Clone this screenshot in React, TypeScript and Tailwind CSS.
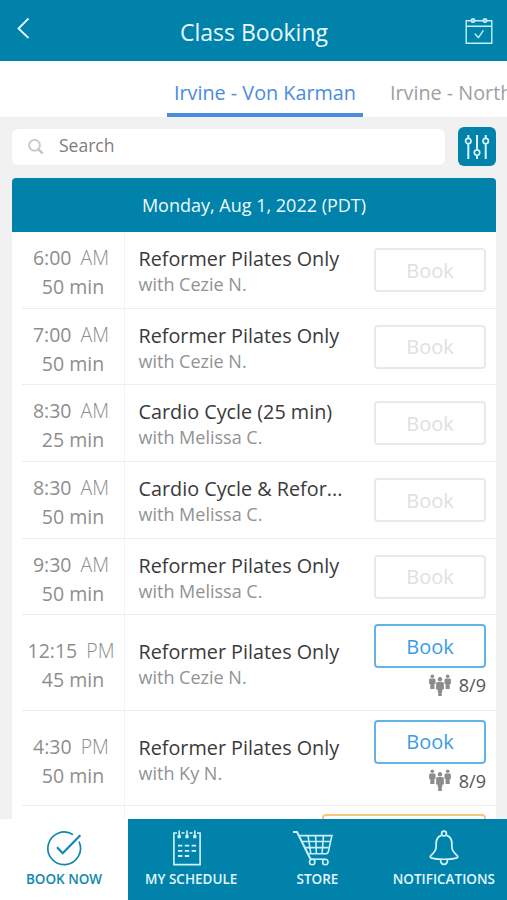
import type { ReactNode } from 'react'

type ClassRow = {
  time: string
  period: string
  length: string
  name: string
  teacher: string
  spots?: string
}

const CLASSES: ClassRow[] = [
  { time: '6:00', period: 'AM', length: '50 min', name: 'Reformer Pilates Only', teacher: 'with Cezie N.' },
  { time: '7:00', period: 'AM', length: '50 min', name: 'Reformer Pilates Only', teacher: 'with Cezie N.' },
  { time: '8:30', period: 'AM', length: '25 min', name: 'Cardio Cycle (25 min)', teacher: 'with Melissa C.' },
  { time: '8:30', period: 'AM', length: '50 min', name: 'Cardio Cycle & Refor...', teacher: 'with Melissa C.' },
  { time: '9:30', period: 'AM', length: '50 min', name: 'Reformer Pilates Only', teacher: 'with Melissa C.' },
  { time: '12:15', period: 'PM', length: '45 min', name: 'Reformer Pilates Only', teacher: 'with Cezie N.', spots: '8/9' },
  { time: '4:30', period: 'PM', length: '50 min', name: 'Reformer Pilates Only', teacher: 'with Ky N.', spots: '8/9' },
]

function BackIcon() {
  return (
    <svg width="14" height="22" viewBox="0 0 14 22" fill="none" stroke="#dff6fc" strokeWidth="1.9" aria-hidden="true">
      <path d="M11.5 1.5L1.5 11.5L11.5 21" />
    </svg>
  )
}

function CalendarCheckIcon() {
  return (
    <svg width="28" height="28" viewBox="0 0 28 28" fill="none" stroke="#c5eefa" strokeWidth="1.4" aria-hidden="true">
      <path d="M6.2 3.8H1.2V26.2H26.8V3.8H21.8M9.8 3.8H18.2M1.2 9.2H26.8" />
      <circle cx="8" cy="3.6" r="1.8" fill="#8fd3e8" />
      <circle cx="20" cy="3.6" r="1.8" fill="#8fd3e8" />
      <path d="M9.8 16.8L13.4 20.6L18.4 13.4" />
    </svg>
  )
}

function SearchIcon() {
  return (
    <svg width="16" height="16" viewBox="0 0 16 16" fill="none" stroke="#c6c6c6" aria-hidden="true">
      <circle cx="6.5" cy="6.3" r="5.4" strokeWidth="1.8" />
      <path d="M10.5 10.3L14.8 14.6" strokeWidth="2.6" />
    </svg>
  )
}

function SlidersIcon() {
  return (
    <svg width="26" height="26" viewBox="0 0 26 26" fill="none" stroke="#d8f5fd" strokeWidth="2" aria-hidden="true">
      <path d="M4.3 1V4M4.3 10V25M13 1V15.5M13 21.5V25M21.7 1V4M21.7 10V25" />
      <circle cx="4.3" cy="7" r="2.7" strokeWidth="1.7" />
      <circle cx="13" cy="18.6" r="2.7" strokeWidth="1.7" />
      <circle cx="21.7" cy="7" r="2.7" strokeWidth="1.7" />
    </svg>
  )
}

function PeopleIcon() {
  return (
    <svg width="22" height="23" viewBox="0 0 22 23" fill="#8c8c8c" aria-hidden="true">
      <circle cx="3.3" cy="2.2" r="1.8" />
      <path d="M1.4 4.6H5.2Q6.5 4.6 6.5 6V10H5.4V15H1.3V10H0.1V6Q0.1 4.6 1.4 4.6Z" />
      <circle cx="18.7" cy="2.2" r="1.8" />
      <path d="M16.8 4.6H20.6Q21.9 4.6 21.9 6V10H20.7V15H16.6V10H15.5V6Q15.5 4.6 16.8 4.6Z" />
      <circle cx="11" cy="5.2" r="2.2" />
      <path d="M8.8 8H13.2Q14.9 8 14.9 9.7V15.5H13.3V18H12.8V22H9.2V18H8.7V15.5H7.1V9.7Q7.1 8 8.8 8Z" />
    </svg>
  )
}

function BookNowIcon() {
  return (
    <svg width="36" height="36" viewBox="0 0 36 36" fill="none" stroke="#1088ae" strokeWidth="1.7" aria-hidden="true">
      <path d="M27 4.6A16.3 16.3 0 1 0 33 11.5" />
      <path d="M11 17.2L16.7 23.2L34.3 5.3" strokeWidth="2.2" />
    </svg>
  )
}

function ScheduleIcon() {
  return (
    <svg width="30" height="36" viewBox="0 0 30 36" fill="none" stroke="#d3f3fc" strokeWidth="1.6" className="mr-2" aria-hidden="true">
      <path d="M5 3H1.9V34.6H28.1V3H25" />
      <path d="M7.2 0.5V6M15 0.5V6M22.8 0.5V6M9.5 3H12.5M17.5 3H20.5" />
      <path d="M7.2 5V8.2M15 5V8.2M22.8 5V8.2" strokeWidth="3.2" />
      <path d="M6 15.6H10.4M12.8 15.6H17.2M19.6 15.6H24M6 20.8H10.4M12.8 20.8H17.2M19.6 20.8H24M6 26H10.4M12.8 26H17.2" strokeWidth="1.8" />
    </svg>
  )
}

function CartIcon() {
  return (
    <svg width="42" height="36" viewBox="0 0 42 36" fill="none" stroke="#c9f0fb" strokeWidth="1.6" className="mr-[9px]" aria-hidden="true">
      <path d="M1 2H5L18.6 29.2" strokeWidth="2" />
      <path d="M7.2 5.6H39.9L36.4 21.5Q35.9 23.7 33.8 23.7H15.8" />
      <path d="M9.8 11.5H38M12.5 17.6H36.7M16 5.6L18.8 23.7M23.6 5.6L24.4 23.7M31.5 5.6L30 23.7" />
      <path d="M18 29.2H33" />
      <circle cx="20.2" cy="32" r="2.7" />
      <circle cx="33.3" cy="32" r="2.7" />
    </svg>
  )
}

function BellIcon() {
  return (
    <svg width="30" height="36" viewBox="0 0 30 36" fill="none" stroke="#d3f3fc" strokeWidth="1.7" aria-hidden="true">
      <circle cx="15" cy="3.6" r="2.4" />
      <path d="M12.4 5.4C8.3 6.8 7.1 10 7.1 14V17C7.1 22.5 1.2 25 1.2 27C1.2 30 28.8 30 28.8 27C28.8 25 22.9 22.5 22.9 17V14C22.9 10 21.7 6.8 17.6 5.4" />
      <path d="M11.5 29.4C11.5 36 18.5 36 18.5 29.4" />
    </svg>
  )
}

function NavItem({ icon, label, active }: { icon: ReactNode; label: string; active?: boolean }) {
  return (
    <button
      className={`flex flex-col items-center pt-[11px] text-[13.5px] leading-[18px] font-semibold whitespace-nowrap ${
        active ? 'w-32 bg-white text-[#1088ae]' : 'flex-1 text-[#e0f7fd]'
      }`}
    >
      {icon}
      <span className="mt-1">{label}</span>
    </button>
  )
}

function Row({ item }: { item: ClassRow }) {
  const open = Boolean(item.spots)

  return (
    <li className={`ml-[10px] flex shrink-0 border-b border-[#ebeded] ${open ? 'h-[95.5px]' : 'h-[76.7px]'}`}>
      <div
        className={`w-[103px] shrink-0 border-r border-[#f0f3f3] pr-1 text-center text-[19.5px] leading-[29px] text-[#8e8e8e] ${
          open ? 'pt-[21px]' : 'pt-[11px]'
        }`}
      >
        <p className="whitespace-nowrap">
          {item.time}
          <span className="ml-[9px] font-light">{item.period}</span>
        </p>
        <p className="pl-1">{item.length}</p>
      </div>

      <div className={`flex-1 pl-[13.5px] ${open ? 'pt-[23px]' : 'pt-[13px]'}`}>
        <p className="text-[19.8px] leading-[27px] whitespace-nowrap text-[#3a3a3a]">{item.name}</p>
        <p className="text-[18px] leading-[25px] text-[#929292]">{item.teacher}</p>
      </div>

      <div className={`mr-[10px] flex w-[112px] shrink-0 flex-col items-end ${open ? 'pt-[9px]' : 'pt-4'}`}>
        <button
          className={`h-[44px] w-full rounded-[4px] border-2 pt-px text-[20px] leading-none ${
            open ? 'border-[#62b3ea] text-[#3a9de4]' : 'border-[#e9e9e9] text-[#e0e0e0]'
          }`}
        >
          Book
        </button>
        {open && (
          <div className="mt-1 flex items-center gap-2">
            <PeopleIcon />
            <span className="text-[18px] leading-[26px] text-[#555]">{item.spots}</span>
          </div>
        )}
      </div>
    </li>
  )
}

export default function App() {
  return (
    <div className="flex h-[900px] w-[507px] flex-col overflow-hidden bg-[#f1f1f1] font-['Open_Sans',sans-serif]">
      <header className="flex h-[61px] shrink-0 items-start justify-between bg-[#0082ab] pr-[14px] pl-[17px]">
        <button className="mt-[17px] w-[26px]" aria-label="Back">
          <BackIcon />
        </button>
        <h1 className="mt-4 text-[23px] leading-8 text-[#e8fafe]">Class Booking</h1>
        <button className="mt-[17px]" aria-label="Calendar">
          <CalendarCheckIcon />
        </button>
      </header>

      {/* Location tabs, scroll off to the right */}
      <nav className="flex h-[56px] shrink-0 gap-5 overflow-x-hidden bg-white pl-[167px] text-[19.8px] whitespace-nowrap">
        <a className="shrink-0 border-b-4 border-[#4a8cdd] px-[7px] pt-[18px] leading-[28px] text-[#4a8cdd]">Irvine - Von Karman</a>
        <a className="shrink-0 px-[7px] pt-[18px] leading-[28px] text-[#a0a0a0]">Irvine - North</a>
      </nav>

      {/* Search and filters */}
      <div className="mt-[10px] flex shrink-0 items-center gap-[13px] pr-[11px] pl-3">
        <div className="flex h-9 flex-1 items-center gap-[15px] rounded-[6px] bg-white pl-4">
          <SearchIcon />
          <span className="-mt-0.5 text-[17.5px] text-[#7d7d7d]">Search</span>
        </div>
        <button className="flex h-[39px] w-[38px] items-center justify-center rounded-[6px] bg-[#0082ab]" aria-label="Filters">
          <SlidersIcon />
        </button>
      </div>

      <main className="mt-3 mr-[11px] ml-3 flex min-h-0 flex-1 flex-col overflow-hidden rounded-t-[4px] bg-white">
        <h2 className="flex h-[54px] shrink-0 items-center justify-center bg-[#0082ab] text-[18px] text-[#edfbfe]">
          Monday, Aug 1, 2022 (PDT)
        </h2>
        <ul className="flex flex-col">
          {CLASSES.map((item, i) => (
            <Row key={i} item={item} />
          ))}
          {/* Waitlist class, cut off by the tab bar */}
          <li className="ml-[10px] flex h-24 shrink-0">
            <div className="w-[103px] border-r border-[#f0f3f3]" />
            <div className="mt-2 mr-[10px] ml-auto h-[44px] w-[164px] rounded-[4px] border-2 border-[#f7c67e]" />
          </li>
        </ul>
      </main>

      <footer className="flex h-[81px] shrink-0 bg-[#0082ab]">
        <NavItem icon={<BookNowIcon />} label="BOOK NOW" active />
        <NavItem icon={<ScheduleIcon />} label="MY SCHEDULE" />
        <NavItem icon={<CartIcon />} label="STORE" />
        <NavItem icon={<BellIcon />} label="NOTIFICATIONS" />
      </footer>
    </div>
  )
}
